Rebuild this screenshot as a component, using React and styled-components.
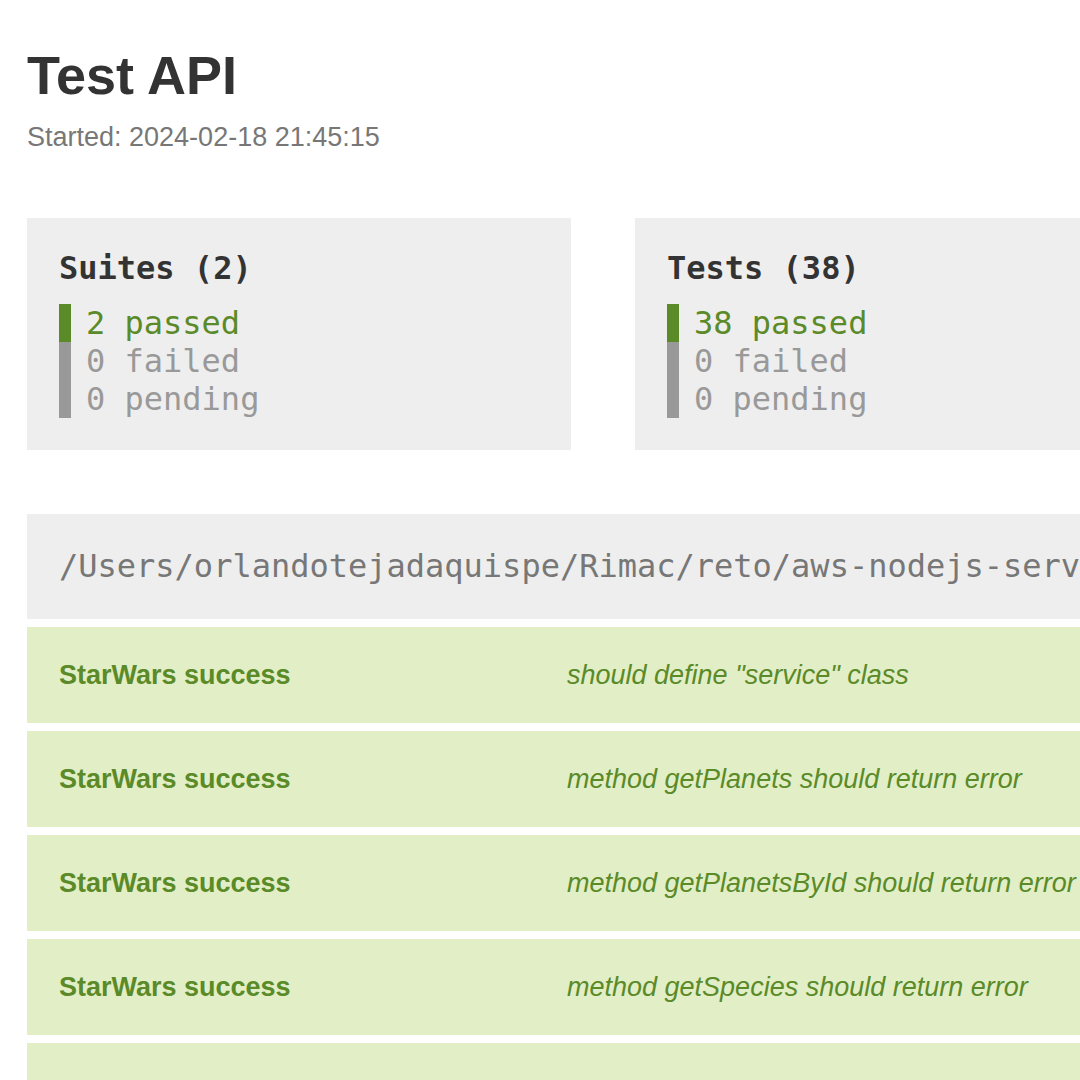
import React from 'react';
import styled, { createGlobalStyle } from 'styled-components';

const GlobalStyle = createGlobalStyle`
  html, body {
    margin: 0;
    padding: 0;
    overflow: hidden;
    background: #fff;
  }

  body {
    font-family: "Liberation Sans", Arial, sans-serif;
    color: #333;
  }
`;

const summaries = [
  { title: 'Suites', total: 2, passed: 2, failed: 0, pending: 0 },
  { title: 'Tests', total: 38, passed: 38, failed: 0, pending: 0 },
];

const suitePath =
  '/Users/orlandotejadaquispe/Rimac/reto/aws-nodejs-serverless/src/__tests__/starwars.service.test.ts';

const tests = [
  { suite: 'StarWars success', name: 'should define "service" class' },
  { suite: 'StarWars success', name: 'method getPlanets should return error' },
  { suite: 'StarWars success', name: 'method getPlanetsById should return error' },
  { suite: 'StarWars success', name: 'method getSpecies should return error' },
  { suite: 'StarWars success', name: 'method getPeople should return error' },
];

const App = () => {
  return (
    <>
      <GlobalStyle />
      <Page>
        <Title>Test API</Title>
        <Started>Started: 2024-02-18 21:45:15</Started>

        <SummaryRow>
          {summaries.map((s) => (
            <SummaryBox key={s.title}>
              <SummaryTitle>
                {s.title} ({s.total})
              </SummaryTitle>
              <StatList>
                <Stat $passed={s.passed > 0}>{s.passed} passed</Stat>
                <Stat>{s.failed} failed</Stat>
                <Stat>{s.pending} pending</Stat>
              </StatList>
            </SummaryBox>
          ))}
        </SummaryRow>

        <Suite>
          <SuitePath>{suitePath}</SuitePath>
          {tests.map((t, i) => (
            <TestRow key={i}>
              <TestSuite>{t.suite}</TestSuite>
              <TestName>{t.name}</TestName>
            </TestRow>
          ))}
        </Suite>
      </Page>
    </>
  );
};

const Page = styled.main`
  width: 1700px;
  padding: 45px 27px 60px;
`;

const Title = styled.h1`
  margin: 0;
  font-size: 54px;
  line-height: 60px;
  font-weight: 700;
  color: #333;
`;

const Started = styled.div`
  margin-top: 16px;
  font-size: 27px;
  line-height: 32px;
  color: #777;
`;

const SummaryRow = styled.section`
  display: flex;
  gap: 64px;
  margin-top: 65px;
`;

const SummaryBox = styled.div`
  width: 544px;
  box-sizing: border-box;
  padding: 32px;
  background: #eee;
  font-family: "DejaVu Sans Mono", "Liberation Mono", monospace;
`;

const SummaryTitle = styled.div`
  font-size: 32px;
  line-height: 37px;
  font-weight: 700;
  color: #333;
`;

const StatList = styled.div`
  display: flex;
  flex-direction: column;
  margin-top: 17px;
`;

const Stat = styled.div`
  font-size: 32px;
  line-height: 38px;
  padding-left: 15px;
  border-left: 12px solid ${({ $passed }) => ($passed ? '#5b8a29' : '#999')};
  color: ${({ $passed }) => ($passed ? '#5b8a29' : '#999')};
`;

const Suite = styled.section`
  margin-top: 64px;
  display: flex;
  flex-direction: column;
  gap: 8px;
`;

const SuitePath = styled.div`
  padding: 32px 32px 33px;
  background: #eee;
  font-family: "DejaVu Sans Mono", "Liberation Mono", monospace;
  font-size: 32px;
  line-height: 40px;
  color: #777;
  white-space: nowrap;
`;

const TestRow = styled.div`
  display: flex;
  align-items: center;
  height: 96px;
  padding: 0 32px;
  background: #e2efc6;
  color: #5b8a29;
  font-size: 27px;
  line-height: 32px;
  white-space: nowrap;
`;

const TestSuite = styled.div`
  width: 508px;
  flex-shrink: 0;
  font-weight: 700;
`;

const TestName = styled.div`
  font-style: italic;
`;

export default App;
